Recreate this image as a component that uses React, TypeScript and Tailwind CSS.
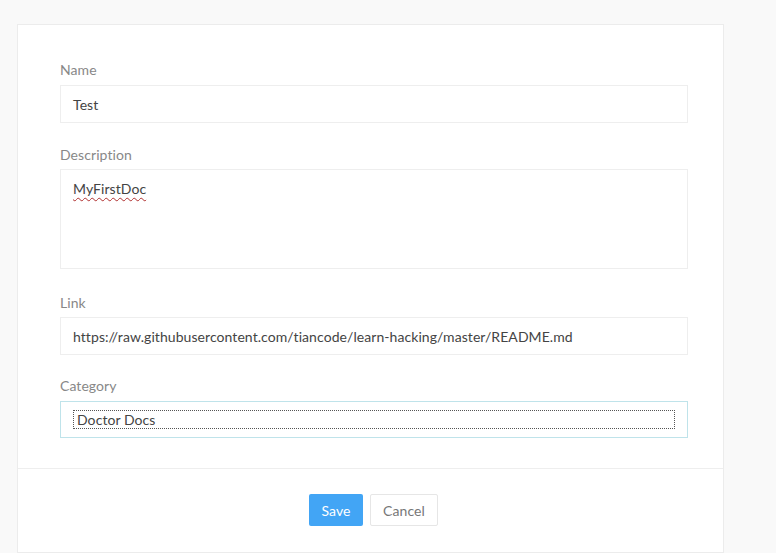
export default function App() {
  return (
    <div className="min-h-[553px] bg-[#f9f9f9] pt-[24px] pl-[17px] font-['Lato',sans-serif] text-[14px] tracking-[0.07px]">
      <div className="w-[707px] border border-[#ececec] bg-white">
        <div className="pl-[42px] pr-[35px] pt-[35px]">
          <div className="leading-[20px] text-[#888]">Name</div>
          <div className="mt-[5px] flex h-[38px] items-center border border-[#eeeeee] pl-[12px] text-[#444]">Test</div>

          <div className="mt-[22px] leading-[20px] text-[#888]">Description</div>
          <div className="mt-[4px] h-[100px] border border-[#eeeeee] pl-[12px] pt-[9px] leading-[20px] text-[#444]">
            <span className="underline decoration-wavy decoration-[#b03030] decoration-[1px] underline-offset-[3px]">MyFirstDoc</span>
          </div>

          <div className="mt-[24px] leading-[20px] text-[#888]">Link</div>
          <div className="mt-[4px] flex h-[38px] items-center border border-[#eeeeee] pl-[12px] text-[#444]">
            https://raw.githubusercontent.com/tiancode/learn-hacking/master/README.md
          </div>

          <div className="mt-[21px] leading-[20px] text-[#888]">Category</div>
          <div className="mt-[5px] flex h-[37px] items-center border border-[#bfe3ea] px-[12px]">
            <div className="flex h-[19px] w-full items-center border border-dotted border-[#555] pl-[3px] text-[#444]">
              Doctor Docs
            </div>
          </div>
        </div>

        <div className="mt-[30px] border-t border-[#eeeeee]" />

        <div className="flex justify-center gap-[7px] pl-[42px] pr-[36px] pt-[25px] pb-[26px]">
          <button className="h-[32px] w-[54px] rounded-[2px] bg-[#42a5f5] text-white">Save</button>
          <button className="h-[32px] w-[68px] rounded-[2px] border border-[#e6e6e6] bg-white text-[#777]">Cancel</button>
        </div>
      </div>
    </div>
  );
}
